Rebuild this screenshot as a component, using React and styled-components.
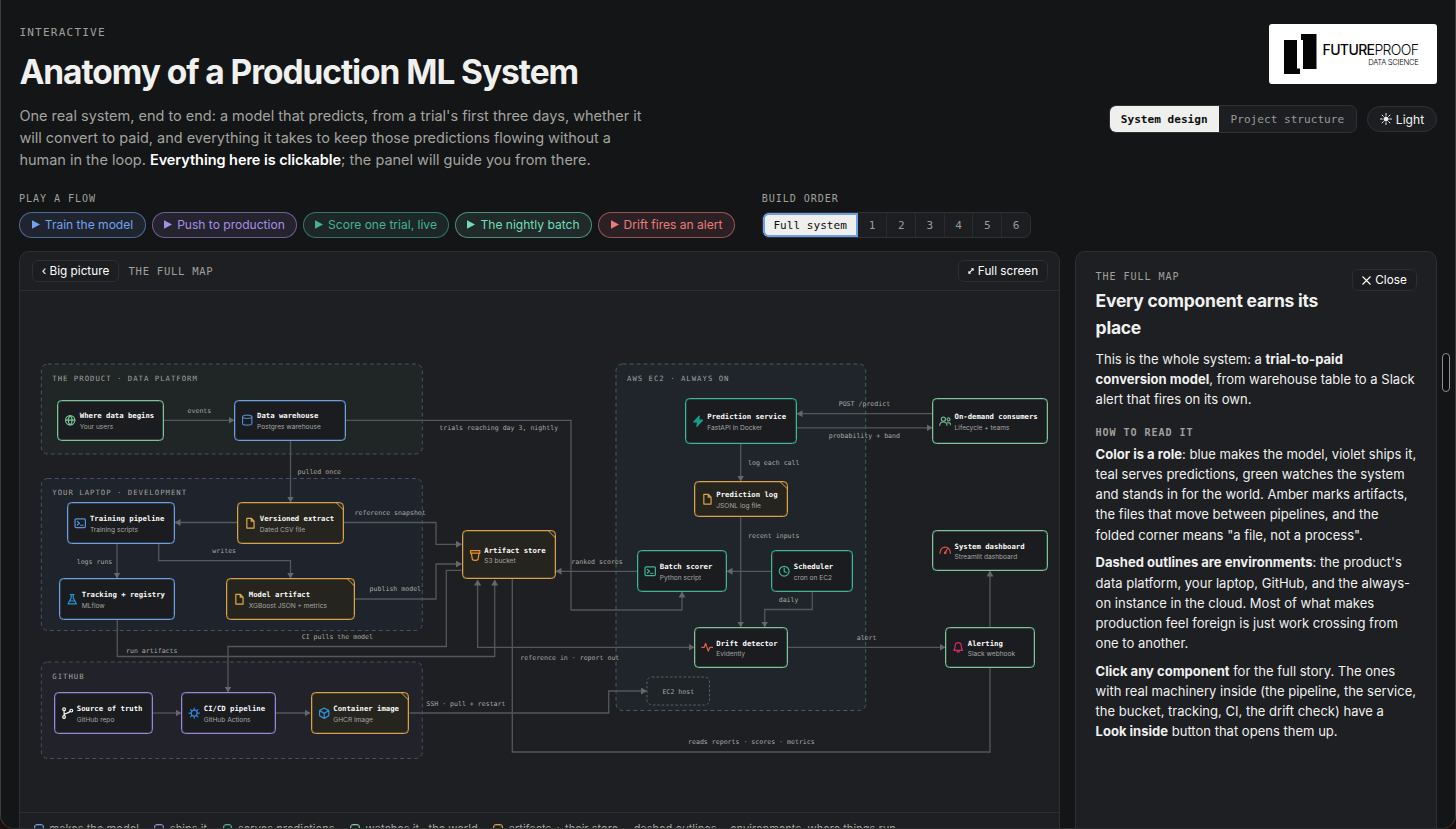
import React from "react";
import styled, { createGlobalStyle } from "styled-components";

const MONO = `"DejaVu Sans Mono", "Liberation Mono", monospace`;
const SANS = `Inter, "Liberation Sans", sans-serif`;

const GREEN = "#7cc49a";
const BLUE = "#6c9ee2";
const TEAL = "#3fb596";
const VIOLET = "#9a86d8";
const AMBER = "#d6a24a";

const GlobalStyle = createGlobalStyle`
  *, *::before, *::after { box-sizing: border-box; }
  html, body { margin: 0; background: #1c0f0e; overflow: hidden; }
  body { font-family: ${SANS}; color: #f0f0ee; }
  button { font: inherit; color: inherit; margin: 0; padding: 0; }
`;

const Window = styled.div`
  position: relative;
  width: 1456px;
  height: 829px;
  overflow: hidden;
  background: #141517;
  border: 1px solid #3b3d3f;
  border-top: 0;
  border-bottom-color: #2c2d2f;
  border-radius: 0 0 14px 14px;
  padding: 24px 18px 0 18px;
`;

const Header = styled.header`
  display: flex;
  justify-content: space-between;
  height: 168px;
`;

const Intro = styled.div`
  display: flex;
  flex-direction: column;
  align-items: flex-start;
  padding: 1px 0 0 0.4px;
  white-space: nowrap;
`;

const Eyebrow = styled.div`
  font-family: ${MONO};
  font-size: ${(p) => p.$size || 10.1}px;
  font-weight: ${(p) => (p.$bold ? 700 : 400)};
  letter-spacing: ${(p) => p.$track || 0.92}px;
  line-height: 16px;
  color: #a0a09c;
  white-space: nowrap;
`;

const Title = styled.h1`
  margin: 8.5px 0 0;
  font-size: 33.5px;
  line-height: 44px;
  font-weight: 700;
  letter-spacing: -1.07px;
  color: #f0f0ee;
`;

const Lead = styled.p`
  margin: 11.3px 0 0;
  font-size: 14.49px;
  line-height: 22.3px;
  color: #a3a39f;
  strong { color: #fff; font-weight: 600; letter-spacing: -0.05px; }
`;

const HeaderSide = styled.div`
  display: flex;
  flex-direction: column;
  align-items: flex-end;
`;

const Logo = styled.div`
  width: 168px;
  height: 60px;
  padding-left: 13.5px;
  display: flex;
  align-items: center;
  gap: 6px;
  background: #fff;
  border-radius: 3px;
  color: #050505;
`;

const Wordmark = styled.div`
  display: flex;
  flex-direction: column;
  align-items: flex-end;
  white-space: nowrap;
  padding-top: 4px;
`;

const Brand = styled.div`
  font-size: 14px;
  line-height: 14px;
  font-weight: 300;
  letter-spacing: -0.62px;
  b { font-weight: 500; }
`;

const BrandSub = styled.div`
  font-size: 7.7px;
  line-height: 12px;
  font-weight: 300;
  letter-spacing: -0.35px;
`;

const Controls = styled.div`
  display: flex;
  align-items: center;
  gap: 10px;
  margin-top: 21px;
`;

const Segment = styled.div`
  display: flex;
  height: ${(p) => p.$height}px;
  border: 1px solid #2f3134;
  border-radius: 7px;
  background: #1c1e21;
  overflow: hidden;
`;

const SegmentItem = styled.button`
  width: ${(p) => p.$width}px;
  border: 0;
  border-left: ${(p) => (p.$divided ? "1px solid #2a2c2f" : "0")};
  box-shadow: ${(p) => (p.$focused ? "inset 0 0 0 2px #6d9fe6" : "none")};
  border-radius: ${(p) => (p.$focused ? "6px 0 0 6px" : "0")};
  background: ${(p) => (p.$active ? "#efefed" : "transparent")};
  color: ${(p) => (p.$active ? "#0c0d0e" : "#9b9b98")};
  font-family: ${MONO};
  font-size: 11.1px;
  font-weight: ${(p) => (p.$bold ? 700 : 400)};
  white-space: nowrap;
`;

const ThemeButton = styled.button`
  display: flex;
  align-items: center;
  justify-content: center;
  gap: 4px;
  width: 70px;
  height: 26px;
  border: 1px solid #2f3134;
  border-radius: 13px;
  background: #1c1e21;
  font-size: 12.1px;
  color: #f4f4f2;
`;

const ControlBar = styled.div`
  display: flex;
  gap: 26.7px;
  height: 59px;
`;

const ControlGroup = styled.div`
  display: flex;
  flex-direction: column;
  gap: 5px;
  margin-top: -1px;
`;

const Chips = styled.div`
  display: flex;
  gap: 6px;
`;

const Chip = styled.button`
  display: flex;
  align-items: center;
  justify-content: center;
  gap: 5px;
  width: ${(p) => p.$width}px;
  height: 26px;
  padding-bottom: 1px;
  border: 1px solid ${(p) => p.$tint}90;
  border-radius: 13px;
  background: ${(p) => p.$fill};
  color: ${(p) => p.$tint};
  font-size: 12.05px;
  white-space: nowrap;
`;

const Columns = styled.main`
  display: flex;
  gap: 15px;
`;

const Card = styled.section`
  width: ${(p) => p.$width}px;
  height: 600px;
  flex: none;
  border: 1px solid #2d2f32;
  border-radius: 10px;
  background: #1d1f22;
`;

const Toolbar = styled.div`
  display: flex;
  align-items: center;
  height: 39px;
  padding: 0 11px 0 12px;
  border-bottom: 1px solid #2b2d30;
`;

const GhostButton = styled.button`
  display: flex;
  align-items: center;
  justify-content: center;
  gap: 4px;
  width: ${(p) => p.$width}px;
  height: 22px;
  border: 1px solid #2c2e32;
  border-radius: 6px;
  background: #1b1d20;
  font-size: 11.75px;
  color: #fff;
  white-space: nowrap;
`;

const ToolbarLabel = styled(Eyebrow)`
  flex: 1;
  margin-left: 9.5px;
`;

const Canvas = styled.div`
  position: relative;
  height: 521px;
`;

const EdgeLayer = styled.svg`
  display: block;
  text {
    font-family: ${MONO};
    font-size: 6.58px;
    fill: #a9a9a6;
    dominant-baseline: central;
    white-space: pre;
  }
  text.zone {
    font-size: 7.3px;
    letter-spacing: 1px;
    fill: #a2a29f;
  }
`;

const NodeBox = styled.div`
  position: absolute;
  left: ${(p) => p.$x - 20}px;
  top: ${(p) => p.$y - 291}px;
  width: ${(p) => p.$w}px;
  height: ${(p) => p.$h}px;
  display: flex;
  align-items: center;
  gap: 3.2px;
  padding: 0 0 0 6.2px;
  border: 1px solid ${(p) => p.$tone};
  border-radius: 4.5px;
  box-shadow: inset 0 0 0 1px ${(p) => p.$tone}44;
  background: ${(p) => (p.$file ? "#26241f" : "#1a1c1f")};
  white-space: nowrap;
`;

const NodeText = styled.div`
  padding-top: 3.6px;
`;

const NodeTitle = styled.div`
  font-family: ${MONO};
  font-size: 7.28px;
  line-height: 11.5px;
  font-weight: 700;
  color: #fafaf8;
`;

const NodeSub = styled.div`
  font-size: 6.6px;
  line-height: 11.5px;
  color: #a6a6a3;
`;

const Fold = styled.svg`
  position: absolute;
  top: -1px;
  right: -1px;
`;

const Legend = styled.div`
  display: flex;
  align-items: center;
  gap: 15.5px;
  height: 33px;
  padding-left: 14px;
  border-top: 1px solid #2b2d30;
  font-size: 11.1px;
  color: #a3a39f;
  white-space: nowrap;
`;

const LegendItem = styled.span`
  display: flex;
  align-items: center;
  gap: 6px;
`;

const Swatch = styled.i`
  width: 9.5px;
  height: 9.5px;
  border: 1.5px solid ${(p) => p.$tone};
  box-shadow: inset 0 0 0 1px ${(p) => p.$tone}55;
  border-radius: 3px;
`;

const PanelBody = styled.div`
  padding: 17px 19px 0 19.6px;
`;

const PanelHead = styled.div`
  display: flex;
  justify-content: space-between;
  align-items: flex-start;
`;

const PanelTitle = styled.h2`
  margin: 2px 0 0;
  font-size: 17.5px;
  line-height: 27px;
  font-weight: 700;
  letter-spacing: -0.24px;
  white-space: nowrap;
`;

const PanelText = styled.p`
  margin: ${(p) => p.$top}px 0 0;
  font-size: 13.04px;
  line-height: 20.1px;
  color: #f0f0ee;
  white-space: nowrap;
  strong { font-weight: 700; }
`;

const PanelLabel = styled(Eyebrow)`
  margin-top: 15.3px;
`;

const ScrollThumb = styled.div`
  position: absolute;
  left: 1441px;
  top: 353px;
  width: 8px;
  height: 39px;
  border: 1px solid #8c8e90;
  border-radius: 4px;
  background: #0c0d0e;
`;

function Icon({ name, color, size = 12.4 }) {
  const shapes = {
    globe: <><circle cx="12" cy="12" r="9" /><path d="M3 12h18M12 3c-5 5-5 13 0 18M12 3c5 5 5 13 0 18" /></>,
    db: <><ellipse cx="12" cy="5.500" rx="9" ry="3.200" /><path d="M3 5.500v13c0 1.800 4 3.200 9 3.200s9-1.400 9-3.200v-13" /></>,
    terminal: <><rect x="2" y="3.500" width="20" height="17" rx="2" /><path d="M6.500 8.500l4 3.500-4 3.500M12.500 16h5" /></>,
    file: <path d="M14 2.500H5.500v19h14V8zM14 2.500V8h5.500" />,
    flask: <path d="M8.500 3h7M10 3v6.500L4 21h16L14 9.500V3M7 15.500h10" />,
    branch: <><circle cx="6" cy="4.500" r="2.700" /><circle cx="6" cy="19.500" r="2.700" /><circle cx="20" cy="7" r="2.700" /><path d="M6 7.500v9M17.500 8.500C15 13 9 11 6.300 15" /></>,
    gear: <><circle cx="12" cy="12" r="5.800" /><path d="M12 6V2M12 22v-4M6 12H2M22 12h-4M7.800 7.800L5 5M19 19l-2.800-2.800M7.800 16.200L5 19M19 5l-2.800 2.800" /></>,
    cube: <path d="M12 2l9 5v10l-9 5-9-5V7zM3 7l9 5 9-5M12 12v10" />,
    bucket: <path d="M3 3h18v5H3zM4.500 8l2 12c1.500 2.500 9.500 2.500 11 0l2-12M12 8v0" />,
    bolt: <path d="M14 2L3.500 13.500H11L9.500 22 20.500 10H13z" fill={color} />,
    users: <><circle cx="8.500" cy="8" r="4" /><circle cx="18.500" cy="8.500" r="2.800" /><path d="M1.500 20c0-4.500 3-6.500 7-6.500s7 2 7 6.500M16.500 15c3.500-1 6 .5 6 4" /></>,
    clock: <><circle cx="12" cy="12" r="9.500" /><path d="M12 6v6.500l4 2" /></>,
    pulse: <path d="M1.500 12.500h4.500l3-8 5 15 3-7h5.500" />,
    gauge: <><path d="M2 18C1.500 2 22.500 2 22 18M12 17l4-7" /><circle cx="12" cy="17" r="1.500" fill={color} /></>,
    bell: <path d="M3.500 18h17c-2-2-2.500-4-2.500-8 0-9-12-9-12 0 0 4-.5 6-2.500 8zM9.500 19c.5 3.500 4.500 3.500 5 0" />,
  };
  return (
    <svg width={size} height={size} viewBox="0 0 24 24" fill="none" stroke={color} strokeWidth="2.300" strokeLinejoin="round" strokeLinecap="round">
      {shapes[name]}
    </svg>
  );
}

function Node({ node }) {
  const [title, sub, icon, iconColor, tone, x1, y1, x2, y2] = node;
  const file = tone === AMBER;
  return (
    <NodeBox $x={x1} $y={y1} $w={x2 - x1} $h={y2 - y1} $tone={tone} $file={file}>
      <Icon name={icon} color={iconColor} />
      <NodeText>
        <NodeTitle>{title}</NodeTitle>
        <NodeSub>{sub}</NodeSub>
      </NodeText>
      {file && (
        <Fold width="9" height="9" viewBox="0 0 9 9">
          <path d="M1 0.500L9 8.500" stroke={AMBER} strokeWidth="1" />
        </Fold>
      )}
    </NodeBox>
  );
}

const nodes = [
  ["Where data begins", "Your users", "globe", GREEN, GREEN, 57, 399.5, 164, 440.5],
  ["Data warehouse", "Postgres warehouse", "db", "#4f86c6", BLUE, 234.3, 399.5, 346.3, 440.5],
  ["Training pipeline", "Training scripts", "terminal", "#5a93d8", BLUE, 67.2, 502, 174.7, 543.5],
  ["Versioned extract", "Dated CSV file", "file", "#e0aa4c", AMBER, 237, 502, 344, 543.5],
  ["Tracking + registry", "MLflow", "flask", "#2497d8", BLUE, 59, 578, 175.3, 619.7],
  ["Model artifact", "XGBoost JSON + metrics", "file", "#e0aa4c", AMBER, 226, 578, 355.3, 619.7],
  ["Source of truth", "GitHub repo", "branch", "#f4f4f2", VIOLET, 54, 692.4, 153, 734],
  ["CI/CD pipeline", "GitHub Actions", "gear", "#2f86e0", VIOLET, 181, 692.4, 275.7, 734],
  ["Container image", "GHCR image", "cube", "#2f93dc", AMBER, 310.5, 692.4, 409.3, 734],
  ["Artifact store", "S3 bucket", "bucket", "#f0922b", AMBER, 461.5, 530, 556, 579.4],
  ["Prediction service", "FastAPI in Docker", "bolt", "#17a08c", TEAL, 684.5, 398, 797, 443.7],
  ["Prediction log", "JSONL log file", "file", AMBER, AMBER, 693.6, 481, 788.2, 516.8],
  ["Batch scorer", "Python script", "terminal", TEAL, TEAL, 637, 550.3, 726.7, 591.6],
  ["Scheduler", "cron on EC2", "clock", TEAL, TEAL, 771, 550.3, 852.8, 591.6],
  ["Drift detector", "Evidently", "pulse", "#e0604a", GREEN, 693.6, 627, 788.2, 667.9],
  ["On-demand consumers", "Lifecycle + teams", "users", "#6fb28d", GREEN, 931.8, 398, 1048, 443.7],
  ["System dashboard", "Streamlit dashboard", "gauge", "#e2524b", GREEN, 931.8, 530, 1048, 571],
  ["Alerting", "Slack webhook", "bell", "#d42a63", GREEN, 945, 627, 1034.7, 667.9],
];

const zones = [
  [41.3, 364, 422.3, 454, "#202526", "#4b5753", "THE PRODUCT · DATA PLATFORM"],
  [41.3, 478.5, 422.3, 630.5, "#1f232b", "#465163", "YOUR LAPTOP · DEVELOPMENT"],
  [41.3, 662, 422.3, 758.5, "#21222a", "#4c4d5d", "GITHUB"],
  [616, 364, 865.7, 710.5, "#1f252b", "#43605a", "AWS EC2 · ALWAYS ON"],
];

const edges = [
  "M164 420.300H234",
  "M346 420.300H571V610H682V592",
  "M290.500 441V502",
  "M237 522.500H175",
  "M117 544V578",
  "M158.700 544V560.700H290.500V578",
  "M344 522.500H436V544.300H461.500",
  "M355 599H436V564H461.500",
  "M461.500 570.300H446.300V646.500H228V692",
  "M117.300 620V656.500H494.700V580",
  "M409.500 713H608.700V691H646.500",
  "M153 713H181",
  "M276 713H310",
  "M637 571.300H556",
  "M771 571.300H727",
  "M812.300 592V609.500H764.700V627",
  "M740.700 444V481",
  "M740.700 517V627",
  "M932 413.700H797",
  "M797 427.800H932",
  "M788 647.300H945",
  "M512.300 579V752H990V571",
];

const labels = [
  ["events", 187.5, 410.5],
  ["trials reaching day 3, nightly", 439.3, 428.2],
  ["pulled once", 297.5, 472],
  ["reference snapshot", 354.5, 512.8],
  ["logs runs", 76.7, 561.5],
  ["writes", 212.3, 551],
  ["publish model", 369.6, 589],
  ["CI pulls the model", 301.7, 636.7],
  ["run artifacts", 126, 650.6],
  ["ranked scores", 571.3, 561.5],
  ["SSH · pull + restart", 426.3, 703.6],
  ["reference in · report out", 520.3, 657.8],
  ["reads reports · scores · metrics", 688, 742],
  ["alert", 856.7, 637.5],
  ["daily", 778.7, 599.7],
  ["recent inputs", 748, 536.4],
  ["log each call", 748, 462.8],
  ["POST /predict", 838.7, 404],
  ["probability + band", 828.7, 436],
  ["EC2 host", 662.5, 691.5],
];

const flows = [
  ["Train the model", "#6fa3ec", "#20242e", 127],
  ["Push to production", "#a78fe6", "#25232d", 145],
  ["Score one trial, live", "#45b393", "#1d2727", 146],
  ["The nightly batch", "#74dcb4", "#202a2a", 137],
  ["Drift fires an alert", "#ec7b78", "#2b2125", 137],
];

const Play = () => (
  <svg width="8" height="9" viewBox="0 0 8 9"><path d="M0 0.300L8 4.500L0 8.700z" fill="currentColor" /></svg>
);

export default function App() {
  return (
    <>
      <GlobalStyle />
      <Window>
        <Header>
          <Intro>
            <Eyebrow $size={11.1} $track={1.18}>INTERACTIVE</Eyebrow>
            <Title>Anatomy of a Production ML System</Title>
            <Lead>
              One real system, end to end: a model that predicts, from a trial's first three days, whether it<br />
              will convert to paid, and everything it takes to keep those predictions flowing without a<br />
              human in the loop. <strong>Everything here is clickable</strong>; the panel will guide you from there.
            </Lead>
          </Intro>
          <HeaderSide>
            <Logo>
              <svg width="34" height="42" viewBox="0 0 34 42">
                <path d="M1 7H14V35.500H17V41H1zM18 1H33.500V36H20V7H18z" fill="#050505" />
              </svg>
              <Wordmark>
                <Brand><b>FUTURE</b>PROOF</Brand>
                <BrandSub>DATA SCIENCE</BrandSub>
              </Wordmark>
            </Logo>
            <Controls>
              <Segment $height={28}>
                <SegmentItem $width={109} $active $bold>System design</SegmentItem>
                <SegmentItem $width={137.3}>Project structure</SegmentItem>
              </Segment>
              <ThemeButton>
                <svg width="12" height="12" viewBox="0 0 24 24" stroke="currentColor" strokeWidth="2" strokeLinecap="round">
                  <circle cx="12" cy="12" r="4" fill="currentColor" />
                  <path d="M12 1v3.500M12 19.500V23M1 12h3.500M19.500 12H23M4.200 4.200l2.500 2.500M17.300 17.300l2.500 2.500M4.200 19.800l2.500-2.500M17.300 6.700l2.500-2.500" />
                </svg>
                Light
              </ThemeButton>
            </Controls>
          </HeaderSide>
        </Header>

        <ControlBar>
          <ControlGroup>
            <Eyebrow>PLAY A FLOW</Eyebrow>
            <Chips>
              {flows.map(([text, tint, fill, width]) => (
                <Chip key={text} $tint={tint} $fill={fill} $width={width}><Play />{text}</Chip>
              ))}
            </Chips>
          </ControlGroup>
          <ControlGroup>
            <Eyebrow>BUILD ORDER</Eyebrow>
            <Segment $height={26}>
              <SegmentItem $width={95} $active $focused>Full system</SegmentItem>
              {[1, 2, 3, 4, 5, 6].map((n) => (
                <SegmentItem key={n} $width={28.7} $divided={n > 1}>{n}</SegmentItem>
              ))}
            </Segment>
          </ControlGroup>
        </ControlBar>

        <Columns>
          <Card $width={1041}>
            <Toolbar>
              <GhostButton $width={87}>‹ Big picture</GhostButton>
              <ToolbarLabel $size={10.6} $track={0.7}>THE FULL MAP</ToolbarLabel>
              <GhostButton $width={90}>
                <svg width="6" height="6" viewBox="0 0 7 7" fill="none" stroke="currentColor" strokeWidth="1.200">
                  <path d="M1 6l5-5M3.800 1H6v2.200M1 3.800V6h2.200" />
                </svg>
                Full screen
              </GhostButton>
            </Toolbar>
            <Canvas>
              <EdgeLayer width="1039" height="521" viewBox="20 291 1039 521">
                <defs>
                  <marker id="arrow" viewBox="0 0 6 7" refX="5.500" refY="3.500" markerWidth="6" markerHeight="7" markerUnits="userSpaceOnUse" orient="auto-start-reverse">
                    <path d="M0 0L6 3.500L0 7z" fill="#64676b" />
                  </marker>
                </defs>
                {zones.map(([x1, y1, x2, y2, fill, stroke, name]) => (
                  <g key={name}>
                    <rect x={x1} y={y1} width={x2 - x1} height={y2 - y1} rx="6.500" fill={fill} stroke={stroke} strokeDasharray="4 3" />
                    <text className="zone" x={x1 + 11} y={y1 + 14.3}>{name}</text>
                  </g>
                ))}
                <rect x="647" y="677" width="62.500" height="28" rx="5" fill="#1f2429" stroke="#596066" strokeDasharray="2.500 2" />
                <g fill="none" stroke="#54575b" strokeWidth="1.300">
                  {edges.map((d) => <path key={d} d={d} markerEnd="url(#arrow)" />)}
                  <path d="M477.600 580V647.300H694" markerStart="url(#arrow)" markerEnd="url(#arrow)" />
                </g>
                {labels.map(([text, x, y]) => <text key={text} x={x} y={y}>{text}</text>)}
              </EdgeLayer>
              {nodes.map((node) => <Node key={node[0]} node={node} />)}
            </Canvas>
            <Legend>
              <LegendItem><Swatch $tone={BLUE} />makes the model</LegendItem>
              <LegendItem><Swatch $tone={VIOLET} />ships it</LegendItem>
              <LegendItem><Swatch $tone={TEAL} />serves predictions</LegendItem>
              <LegendItem><Swatch $tone={GREEN} />watches it · the world</LegendItem>
              <LegendItem><Swatch $tone={AMBER} />artifacts + their store</LegendItem>
              <LegendItem>dashed outlines = environments, where things run</LegendItem>
            </Legend>
          </Card>

          <Card $width={362}>
            <PanelBody>
              <PanelHead>
                <div>
                  <Eyebrow>THE FULL MAP</Eyebrow>
                  <PanelTitle>Every component earns its<br />place</PanelTitle>
                </div>
                <GhostButton $width={65}>
                  <svg width="9" height="9" viewBox="0 0 9 9" stroke="currentColor" strokeWidth="1.100"><path d="M0.500 0.500l8 8M8.500 0.500l-8 8" /></svg>
                  Close
                </GhostButton>
              </PanelHead>
              <PanelText $top={8}>
                This is the whole system: a <strong>trial-to-paid</strong><br />
                <strong>conversion model</strong>, from warehouse table to a Slack<br />
                alert that fires on its own.
              </PanelText>
              <PanelLabel $bold>HOW TO READ IT</PanelLabel>
              <PanelText $top={3.6}>
                <strong>Color is a role</strong>: blue makes the model, violet ships it,<br />
                teal serves predictions, green watches the system<br />
                and stands in for the world. Amber marks artifacts,<br />
                the files that move between pipelines, and the<br />
                folded corner means "a file, not a process".
              </PanelText>
              <PanelText $top={7.8}>
                <strong>Dashed outlines are environments</strong>: the product's<br />
                data platform, your laptop, GitHub, and the always-<br />
                on instance in the cloud. Most of what makes<br />
                production feel foreign is just work crossing from<br />
                one to another.
              </PanelText>
              <PanelText $top={7.8}>
                <strong>Click any component</strong> for the full story. The ones<br />
                with real machinery inside (the pipeline, the service,<br />
                the bucket, tracking, CI, the drift check) have a<br />
                <strong>Look inside</strong> button that opens them up.
              </PanelText>
            </PanelBody>
          </Card>
        </Columns>
        <ScrollThumb />
      </Window>
    </>
  );
}
